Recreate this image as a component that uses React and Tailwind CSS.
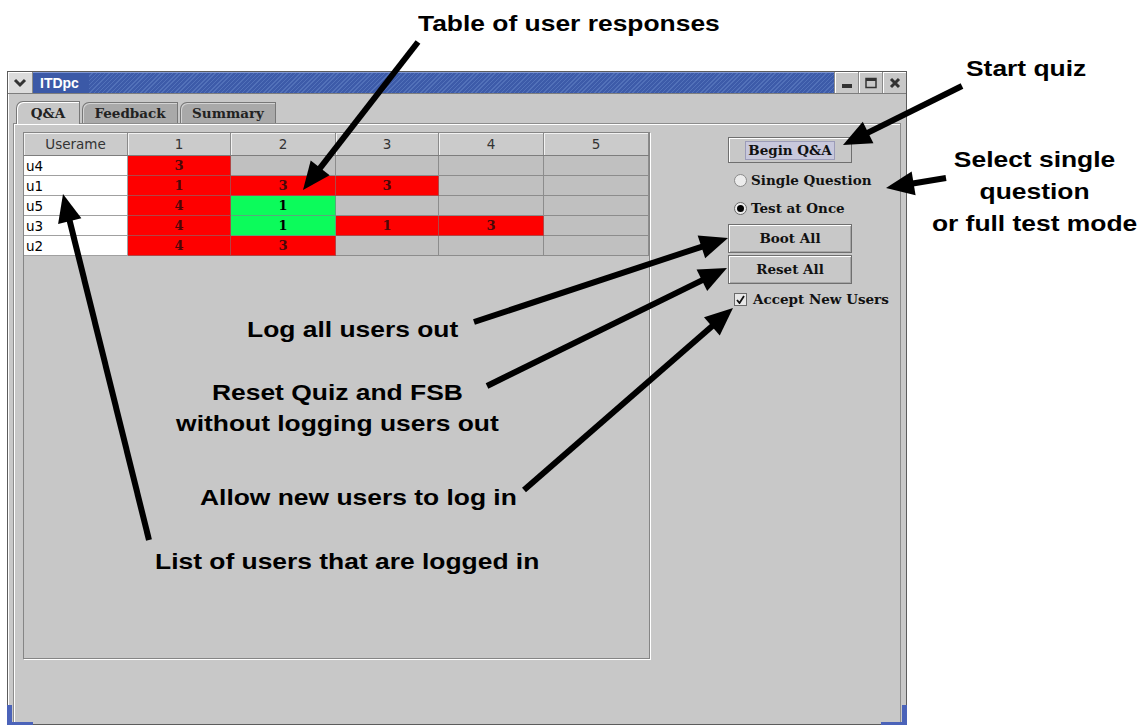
import React from "react";

// quiz grid: each answer cell is [state, value]; r = wrong, g = right
const rows = [
  { user: "u4", cells: [["r", "3"], null, null, null, null] },
  { user: "u1", cells: [["r", "1"], ["r", "3"], ["r", "3"], null, null] },
  { user: "u5", cells: [["r", "4"], ["g", "1"], null, null, null] },
  { user: "u3", cells: [["r", "4"], ["g", "1"], ["r", "1"], ["r", "3"], null] },
  { user: "u2", cells: [["r", "4"], ["r", "3"], null, null, null] },
];

const gridCols = "grid grid-cols-[104px_103px_105px_103px_105px_105px]";
const guiSerif = "font-['DejaVu_Serif',serif]";
const guiSans = "font-['DejaVu_Sans',sans-serif]";

function Arrow({ x1, y1, x2, y2 }) {
  const dx = x2 - x1;
  const dy = y2 - y1;
  const len = Math.hypot(dx, dy);
  const ux = dx / len;
  const uy = dy / len;
  const hl = 28;
  const hw = 12;
  const bx = x2 - ux * hl;
  const by = y2 - uy * hl;
  const px = -uy * hw;
  const py = ux * hw;
  return (
    <g>
      <line x1={x1} y1={y1} x2={bx + ux * 4} y2={by + uy * 4} stroke="#000" strokeWidth="6" />
      <polygon points={`${x2},${y2} ${bx + px},${by + py} ${bx - px},${by - py}`} fill="#000" />
    </g>
  );
}

function TitleBar() {
  return (
    <div className="flex h-[22px] border-b border-[#7d7d7d]">
      <div className="w-[25px] flex items-center justify-center bg-[#dcdcdc] border-r border-[#8a8a8a] shadow-[inset_1px_1px_0_#fff]">
        <svg width="14" height="10" viewBox="0 0 14 10">
          <path d="M2 2 L7 7 L12 2" fill="none" stroke="#333" strokeWidth="3" />
        </svg>
      </div>
      <div className="flex-1 flex items-center bg-[#3b59a7] border-t border-[#7f97d4]">
        <span className="pl-[7px] pr-[10px] text-[14px] font-bold text-white font-['Liberation_Sans',sans-serif]">
          ITDpc
        </span>
        <div className="flex-1 h-full bg-[repeating-linear-gradient(135deg,#3d5ba9_0px,#3d5ba9_2px,#5271b9_2px,#5271b9_3px)]" />
      </div>
      <div className="flex bg-[#c8c8c8]">
        <div className="w-[24px] flex items-center justify-center border-l border-[#8a8a8a] shadow-[inset_1px_1px_0_#fff]">
          <svg width="14" height="14" viewBox="0 0 14 14">
            <rect x="2" y="8" width="10" height="4" fill="#333" />
          </svg>
        </div>
        <div className="w-[24px] flex items-center justify-center border-l border-[#8a8a8a] shadow-[inset_1px_1px_0_#fff]">
          <svg width="14" height="14" viewBox="0 0 14 14">
            <rect x="2" y="2.5" width="10" height="9" fill="none" stroke="#333" strokeWidth="1.5" />
            <rect x="2" y="2" width="10" height="3" fill="#333" />
          </svg>
        </div>
        <div className="w-[24px] flex items-center justify-center border-l border-[#8a8a8a] shadow-[inset_1px_1px_0_#fff]">
          <svg width="14" height="14" viewBox="0 0 14 14">
            <path d="M3 3 L11 11 M11 3 L3 11" stroke="#333" strokeWidth="3" />
          </svg>
        </div>
      </div>
    </div>
  );
}

function Tabs() {
  return (
    <div className={`flex items-end h-[23px] pl-[3px] gap-[2px] text-[13.5px] font-bold text-[#222] ${guiSerif}`}>
      <div className="h-[23px] w-[64px] flex items-center justify-center bg-[#c8c8c8] border border-b-0 border-[#777] rounded-tl-[7px] shadow-[inset_1px_1px_0_#fff] -mb-px relative">
        Q&amp;A
      </div>
      <div className="h-[21px] w-[96px] flex items-center justify-center bg-[#a9a9a9] border border-b-0 border-[#777] rounded-tl-[7px] shadow-[inset_1px_1px_0_#d4d4d4]">
        Feedback
      </div>
      <div className="h-[21px] w-[96px] flex items-center justify-center bg-[#a9a9a9] border border-b-0 border-[#777] rounded-tl-[7px] shadow-[inset_1px_1px_0_#d4d4d4]">
        Summary
      </div>
    </div>
  );
}

function ResponseTable() {
  return (
    <div className="w-[627px] h-[527px] bg-[#c7c7c7] border border-[#858585] shadow-[1px_1px_0_#fff]">
      <div className={`${gridCols} h-[23px] leading-[20px] text-[13.5px] text-[#333] ${guiSans} border-b border-[#7d7d7d]`}>
        {["Userame", ...["1", "2", "3", "4", "5"]].map((h) => (
          <div
            key={h}
            className="flex items-center justify-center bg-[#cbcbcb] border-r border-[#8a8a8a] shadow-[inset_1px_1px_0_#f2f2f2]"
          >
            {h}
          </div>
        ))}
      </div>
      {rows.map((row) => (
        <div key={row.user} className={`${gridCols} h-[20px] grid-rows-[20px] leading-[18px]`}>
          <div className={`flex items-center pl-[2px] bg-white text-[13.5px] text-black border-r border-b border-[#a0a0a0] ${guiSans}`}>
            {row.user}
          </div>
          {row.cells.map((c, i) => (
            <div
              key={i}
              className={`flex items-center justify-center border-r border-b text-[13px] font-bold ${guiSerif} ${
                c === null
                  ? "bg-[#c0c0c0] border-[#8c8c8c]"
                  : c[0] === "r"
                  ? "bg-[#fe0000] border-[#b14646] text-[#4a0808]"
                  : "bg-[#0cfb5b] border-[#5aa87a] text-black"
              }`}
            >
              {c ? c[1] : ""}
            </div>
          ))}
        </div>
      ))}
    </div>
  );
}

function Controls() {
  const btn =
    "h-[29px] w-[124px] flex items-center justify-center bg-[#c8c8c8] border border-[#6f6f6f] shadow-[inset_1px_1px_0_#fff,inset_-1px_-1px_0_#a6a6a6]";
  return (
    <div className={`ml-[78px] mt-[5px] w-[168px] flex flex-col text-[13.5px] font-bold text-[#111] ${guiSerif}`}>
      <div className="h-[26px] w-[124px] flex items-center justify-center bg-[#c8c8c8] border border-[#6f6f6f] shadow-[inset_1px_1px_0_#fff]">
        <span className="px-[2px] leading-[17px] bg-[#c8c8dc] border border-[#9c9cb8]">Begin Q&amp;A</span>
      </div>
      <div className="mt-[7px] h-[20px] flex items-center pl-[6px] gap-[4px]">
        <span className="w-[13px] h-[13px] rounded-full bg-[#ececec] border border-[#8a8a8a]" />
        Single Question
      </div>
      <div className="mt-[8px] h-[20px] flex items-center pl-[6px] gap-[4px]">
        <span className="w-[13px] h-[13px] rounded-full bg-[#ececec] border border-[#6a6a6a] flex items-center justify-center">
          <span className="w-[7px] h-[7px] rounded-full bg-black" />
        </span>
        Test at Once
      </div>
      <div className={`${btn} mt-[6px]`}>Boot All</div>
      <div className={`${btn} mt-[2px]`}>Reset All</div>
      <div className="mt-[6px] h-[18px] flex items-center pl-[6px] gap-[6px]">
        <span className="w-[13px] h-[13px] bg-[#e8e8e8] border border-[#6a6a6a] flex items-center justify-center">
          <svg width="9" height="9" viewBox="0 0 9 9">
            <path d="M1 5 L3.5 8 L8 1" fill="none" stroke="#111" strokeWidth="1.8" />
          </svg>
        </span>
        Accept New Users
      </div>
    </div>
  );
}

function Window() {
  return (
    <div className="relative ml-[7px] mt-[71px] w-[900px] h-[654px] flex flex-col bg-[#c8c8c8] border border-[#5c5c5c]">
      <TitleBar />
      <div className="flex-1 flex flex-col px-[5px] pt-[6px] shadow-[inset_1px_0_0_#fff]">
        <Tabs />
        <div className="flex-1 flex items-start pt-[8px] pl-[9px] border-t border-l border-r border-[#8c8c8c] shadow-[inset_1px_1px_0_#fff]">
          <ResponseTable />
          <Controls />
        </div>
      </div>
      {/* resize corners */}
      <div className="absolute -left-px -bottom-px w-[26px] h-[20px] border-l-[5px] border-b-[3px] border-[#4b63b9]" />
      <div className="absolute -right-px -bottom-px w-[26px] h-[20px] border-r-[5px] border-b-[3px] border-[#4b63b9]" />
    </div>
  );
}

const label = "absolute whitespace-nowrap text-[22px] leading-[32px] font-bold text-black";

export default function App() {
  return (
    <div className="relative w-[1144px] h-[725px] overflow-hidden bg-white font-['Liberation_Sans',Arial,sans-serif]">
      <Window />

      <div className={`${label} left-[418px] top-[8px] origin-left scale-x-[1.2]`}>Table of user responses</div>
      <div className={`${label} left-[966px] top-[53px] origin-left scale-x-[1.2]`}>Start quiz</div>
      <div className="absolute left-[1035px] top-[144px] w-0 flex justify-center">
        <div className="whitespace-nowrap text-center text-[22px] leading-[32px] font-bold scale-x-[1.2]">
          Select single
          <br />
          question
          <br />
          or full test mode
        </div>
      </div>
      <div className={`${label} left-[247px] top-[314px] origin-left scale-x-[1.2]`}>Log all users out</div>
      <div className="absolute left-[337px] top-[377px] w-0 flex justify-center">
        <div className="whitespace-nowrap text-center text-[22px] leading-[31px] font-bold scale-x-[1.2]">
          Reset Quiz and FSB
          <br />
          without logging users out
        </div>
      </div>
      <div className={`${label} left-[200px] top-[482px] origin-left scale-x-[1.2]`}>Allow new users to log in</div>
      <div className={`${label} left-[155px] top-[546px] origin-left scale-x-[1.2]`}>List of users that are logged in</div>

      <svg className="absolute inset-0 pointer-events-none" width="1144" height="725">
        <Arrow x1={418} y1={42} x2={303} y2={190} />
        <Arrow x1={962} y1={86} x2={843} y2={145} />
        <Arrow x1={946} y1={178} x2={886} y2={188} />
        <Arrow x1={474} y1={322} x2={728} y2={238} />
        <Arrow x1={487} y1={386} x2={727} y2={268} />
        <Arrow x1={524} y1={490} x2={733} y2={308} />
        <Arrow x1={149} y1={540} x2={63} y2={194} />
      </svg>
    </div>
  );
}
